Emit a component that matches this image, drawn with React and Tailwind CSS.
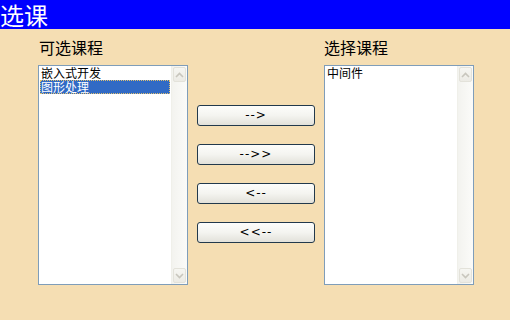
import React from "react";

const font = { fontFamily: '"Noto Sans CJK SC", "DejaVu Sans", sans-serif' };

function Chevron({ up }) {
  return (
    <svg width="9" height="6" viewBox="0 0 9 6" className="block">
      <path
        d={up ? "M1 5 L4.5 1.5 L8 5" : "M1 1 L4.5 4.5 L8 1"}
        fill="none"
        stroke="#c8c6bd"
        strokeWidth="1.6"
      />
    </svg>
  );
}

function ScrollBar() {
  return (
    <div className="w-[16px] h-full flex flex-col bg-gradient-to-r from-[#f3f3ef] to-[#fbfbf9] border-l border-[#f0f0ea]">
      <div className="h-[15px] m-[1px] flex items-center justify-center rounded-[2px] border border-[#e3e2da] bg-gradient-to-b from-[#f6f6f2] to-[#ecebe5]">
        <Chevron up />
      </div>
      <div className="flex-1" />
      <div className="h-[15px] m-[1px] flex items-center justify-center rounded-[2px] border border-[#e3e2da] bg-gradient-to-b from-[#f6f6f2] to-[#ecebe5]">
        <Chevron />
      </div>
    </div>
  );
}

function ListBox({ items, selected }) {
  return (
    <div className="w-[150px] h-[220px] border border-[#7f9db9] bg-white flex">
      <div className="flex-1 flex flex-col pl-[1px] pr-[1px]">
        {items.map((it, i) => (
          <div
            key={it}
            className={
              "h-[14px] leading-[14px] text-[12px] pl-[1px] whitespace-nowrap " +
              (i === selected
                ? "bg-[#316ac5] text-white outline outline-1 outline-dotted outline-[#e0c070] -outline-offset-1"
                : "text-black")
            }
          >
            {it}
          </div>
        ))}
      </div>
      <ScrollBar />
    </div>
  );
}

function Btn({ children }) {
  return (
    <button className="w-[118px] h-[21px] rounded-[3px] border border-[#22394c] bg-gradient-to-b from-[#fdfdfb] via-[#f4f4f0] to-[#e2e1da] text-[12px] leading-[19px] tracking-[1px] text-black flex items-center justify-center font-['DejaVu_Sans',sans-serif]">
      {children}
    </button>
  );
}

export default function App() {
  return (
    <div className="w-[510px] h-[320px] bg-[#f5deb3] overflow-hidden" style={font}>
      <div className="h-[29px] bg-[#0000ff] text-white text-[24px] leading-[28px] flex items-center">
        <span className="leading-[28px]">选课</span>
      </div>
      <div className="flex pl-[38px] pt-[8px] gap-[9px]">
        <div className="flex flex-col">
          <div className="h-[20px] leading-[20px] text-[16px] text-black pl-[1px] mb-[8px]">可选课程</div>
          <ListBox items={["嵌入式开发", "图形处理"]} selected={1} />
        </div>
        <div className="flex flex-col gap-[18px] pt-[68px]">
          <Btn>--&gt;</Btn>
          <Btn>--&gt;&gt;</Btn>
          <Btn>&lt;--</Btn>
          <Btn>&lt;&lt;--</Btn>
        </div>
        <div className="flex flex-col">
          <div className="h-[20px] leading-[20px] text-[16px] text-black mb-[8px]">选择课程</div>
          <ListBox items={["中间件"]} selected={-1} />
        </div>
      </div>
    </div>
  );
}
